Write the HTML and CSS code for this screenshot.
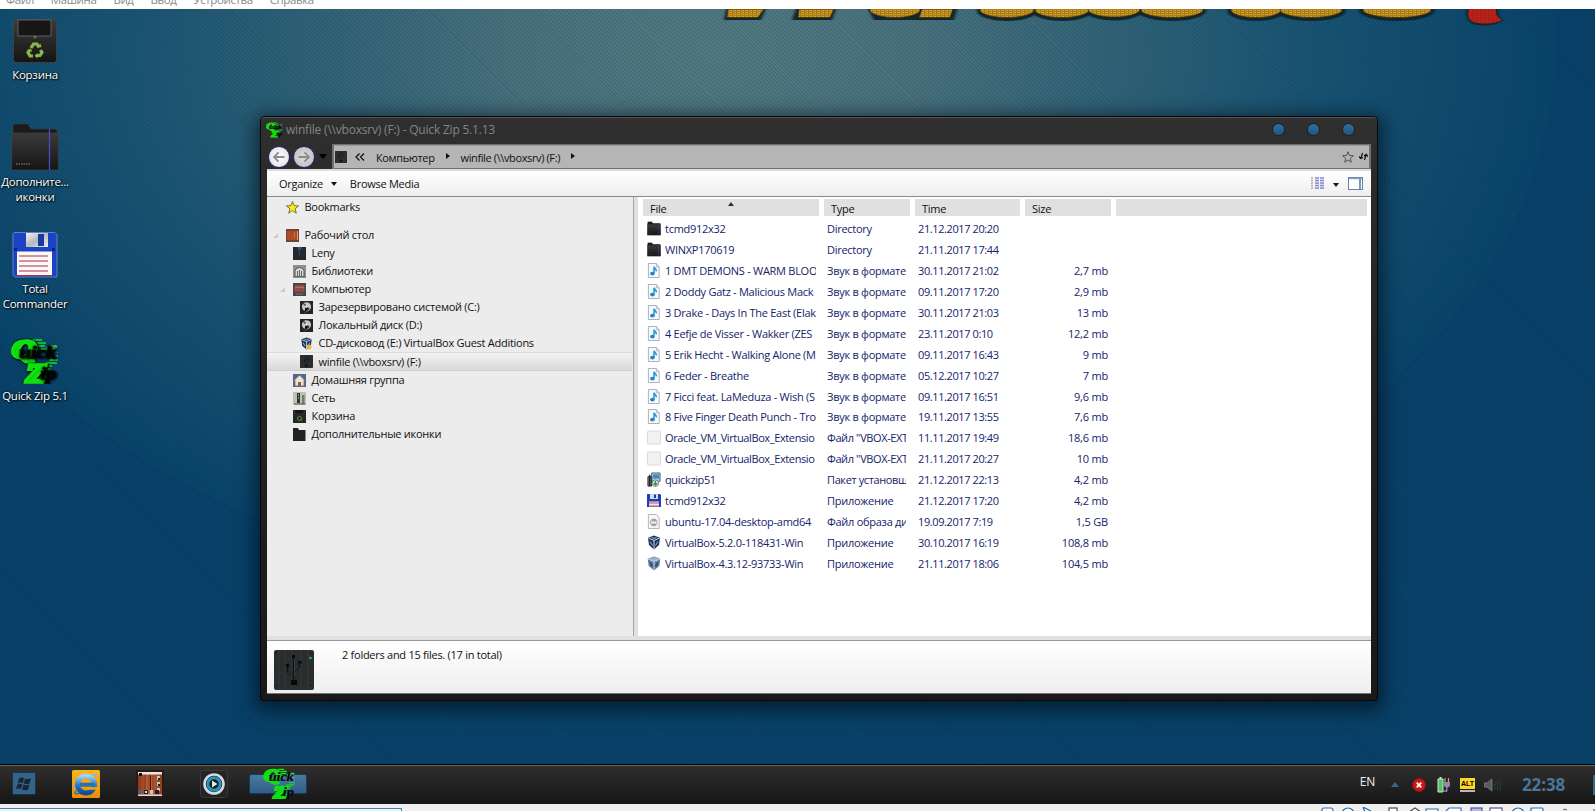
FILE: index.html
```html
<!DOCTYPE html>
<html lang="ru">
<head>
<meta charset="utf-8">
<title>Quick Zip</title>
<link rel="stylesheet" href="styles.css">
</head>
<body>
<svg class="sprite" aria-hidden="true">
  <defs>
    <linearGradient id="dark" x1="0" y1="0" x2="0" y2="1"><stop offset="0" stop-color="#3a3a3a"/><stop offset="1" stop-color="#151515"/></linearGradient>
    <linearGradient id="metal" x1="0" y1="0" x2="1" y2="1"><stop offset="0" stop-color="#f4f4f4"/><stop offset=".5" stop-color="#b9b9bd"/><stop offset="1" stop-color="#ededed"/></linearGradient>
    <linearGradient id="orange" x1="0" y1="0" x2="0" y2="1"><stop offset="0" stop-color="#f9b71c"/><stop offset="1" stop-color="#e88d08"/></linearGradient>
    <linearGradient id="blueball" x1="0" y1="0" x2="0" y2="1"><stop offset="0" stop-color="#9fd4f5"/><stop offset=".5" stop-color="#2c7fc8"/><stop offset="1" stop-color="#0f4c94"/></linearGradient>
    <linearGradient id="wood" x1="0" y1="0" x2="1" y2="0"><stop offset="0" stop-color="#8a3a1c"/><stop offset=".5" stop-color="#c0623a"/><stop offset="1" stop-color="#8d3e20"/></linearGradient>
    <pattern id="weave" width="4" height="4" patternUnits="userSpaceOnUse"><path d="M0 0l1.500 2L0 4M2 2L4 0" stroke="#3d2a00" stroke-width=".8" fill="none" opacity=".7"/></pattern>
  </defs>
  <symbol id="qz" viewBox="0 0 48 46">
    <path d="M22 2h9M26 5h9M25 8h9M30 11h14M38 22h9M34 25h12M33 28h8M30 31h9M24 35h9M38 8h8" stroke="#14e414" stroke-width="1.600"/>
    <path d="M35 9h11M40 14h7M41 18h6" stroke="#8fa6b0" stroke-width="1"/>
    <g class="qz-green"><text x="1" y="20" font-size="25" textLength="24" lengthAdjust="spacingAndGlyphs">Q</text><text x="15" y="44" font-size="26" textLength="20" lengthAdjust="spacingAndGlyphs">Z</text></g>
    <g class="qz-black"><text x="8" y="20" font-size="17" textLength="37" lengthAdjust="spacingAndGlyphs">uick</text><text x="29" y="41" font-size="17" textLength="16" lengthAdjust="spacingAndGlyphs">ip</text></g>
  </symbol>
  <symbol id="folder" viewBox="0 0 48 48">
    <path d="M2 3q0-2 2-2h13l3 5h24q2 0 2 2v6H2z" fill="#1b1b1b" stroke="#3c3c3c" stroke-width=".6"/>
    <rect x=".7" y="10" width="46.600" height="37" rx="1.500" fill="url(#dark)" stroke="#444" stroke-width=".7"/>
    <path d="M38.500 6v41" stroke="#4a4ec0" stroke-width="1.300"/>
    <path d="M5 41h15" stroke="#666" stroke-width="1.400" stroke-dasharray="1.500 1"/>
  </symbol>
  <symbol id="bin" viewBox="0 0 44 44">
    <rect x=".5" y=".5" width="43" height="43" rx="3" fill="url(#dark)" stroke="#444" stroke-width=".8"/>
    <path d="M5 1v16h33V1z" fill="#161616" stroke="#686868" stroke-width=".9"/>
    <circle cx="22" cy="18" r="1.600" fill="#4f7f33"/>
    <g fill="none" stroke="#88b848" stroke-width="3.200"><path d="M18 29l2.500-4h3.500l2 3M27.500 31l1.500 2.500-2 3h-3M20 37h-3l-2-3.500 1.500-2.500"/></g>
    <path d="M24 29l4.500-1-1.200-3.500zM24.500 34v5.500l-3-2.700zM14.500 31l3.500-1.500 1 3.500z" fill="#88b848"/>
  </symbol>
  <symbol id="floppy" viewBox="0 0 46 46">
    <path d="M2 .5h41l2 2V45H3l-2-2V1.500z" fill="#1b43c4" stroke="#6b86cf" stroke-width=".9"/>
    <path d="M14 1h22v14H14z" fill="url(#metal)"/><path d="M26 2h6v12h-6z" fill="#173a9c"/>
    <path d="M5 19.500h35V44H5z" fill="#fbf7f7"/><path d="M7 24h29M7 29h29M7 34h29M7 39h29M5 43.700h35" stroke="#a8304a" stroke-width="1.200"/>
    <path d="M2 16h3v3H2zM40 16h3v3h-3z" fill="#0c247e"/>
  </symbol>
  <symbol id="floppy-small" viewBox="0 0 14 15">
    <path d="M0 1h13l1 1v12H0z" fill="#1b3fc0"/><path d="M3 1h8v5H3z" fill="#d5d9e4"/><path d="M7 1.500h2V5H7z" fill="#173a9c"/><path d="M2 8.500h10v5H2z" fill="#f6dfe2"/><path d="M2 10h10M2 13h10" stroke="#c0566c"/>
  </symbol>
  <symbol id="drive" viewBox="0 0 40 40">
    <rect width="40" height="40" rx="2" fill="#2a2d2d"/><path d="M5 0v40M11 0v40M18 0v40M27 0v40M34 0v40" stroke="#3a3d3d" stroke-width=".7"/>
    <path d="M19.500 33V6M19.500 27l-6-5v-6M19.500 24l6-6v-5" stroke="#0b1714" stroke-width="1.500" fill="none"/><path d="M20.500 26V9M14 22l5 5M26 18l-5 5" stroke="#3f5149" stroke-width=".6" fill="none"/>
    <path d="M12 14h3v3h-3zM24 11h3.500v2.500H24zM17 30h6v5h-6zM18 5h3v3h-3z" fill="#080808"/><circle cx="36.500" cy="8" r="1.300" fill="#36b04a"/><path d="M2 2h1v1H2zM2 35h1v1H2zM36 35h1v1h-1zM36 3h1v1h-1z" fill="#080808"/>
  </symbol>
  <symbol id="music" viewBox="0 0 14 16">
    <path d="M1 .5h8.500L12.500 4v11.500H1z" fill="#f8fbfd" stroke="#9aa3ab" stroke-width=".9"/><path d="M9.500.5V4h3" fill="#dfe4e8" stroke="#9aa3ab" stroke-width=".7"/>
    <ellipse cx="5.300" cy="11.300" rx="2.500" ry="2" fill="#2a7fc4"/><path d="M7 11.500V4c.3 1.800 2.800 2 2.500 5" stroke="#2a9ad8" stroke-width="1.700" fill="none"/>
  </symbol>
  <symbol id="blank" viewBox="0 0 14 14"><rect x=".5" y=".5" width="13" height="13" rx="1" fill="#f1f1f1" stroke="#dadada"/></symbol>
  <symbol id="setup" viewBox="0 0 15 16">
    <path d="M5 1h9v9H5z" fill="#b8c8d2" stroke="#4b5a64"/><path d="M6.500 2.500H13V7H6.500z" fill="#2d8fcb"/><path d="M1 5h4v10H1z" fill="#858585" stroke="#222"/><path d="M3 3v12" stroke="#111" stroke-width="1.300"/><circle cx="9" cy="12" r="3.500" fill="#dfe8df" stroke="#555" stroke-width=".7"/><path d="M9 9.500v4M7 12l2 2 2-2" stroke="#28983c" stroke-width="1.400" fill="none"/>
  </symbol>
  <symbol id="iso" viewBox="0 0 14 16"><path d="M1 .5h8.500L12.500 4v11.500H1z" fill="#f6f6f6" stroke="#aaa" stroke-width=".9"/><circle cx="6.800" cy="9" r="3.500" fill="#a9a9a9" stroke="#777" stroke-width=".7"/><path d="M6.800 9L4 6.500v5zM6.800 9l3-2v4.500z" fill="#e9e9e9"/><circle cx="6.800" cy="9" r="1" fill="#fff"/></symbol>
  <symbol id="vbox" viewBox="0 0 14 15">
    <path d="M7 .5l6 2.200-1 7.300-5 4.500L2 10 1 2.700z" fill="#1c3158"/><path d="M1.500 3L7 5.500 12.500 3M7 5.500V14" stroke="#cfdceb" stroke-width="1" fill="none"/><path d="M3 6.500l2.500 4M11 6.500l-2.500 4M4.500 2.300L7 3.500l2.500-1.200" stroke="#7e9dc4" stroke-width="1.200" fill="none"/>
  </symbol>
  <symbol id="vbox-old" viewBox="0 0 14 15">
    <path d="M7 .5l6.300 2.200-1 7.300L7 14.500 1.700 10 .7 2.700z" fill="#5f7d9f"/><path d="M1 3l6 2.500L13 3 7 1z" fill="#9db2c8"/><path d="M7 5.500V14M1 3l6 2.500L13 3" stroke="#d6e0ea" stroke-width=".8" fill="none"/><path d="M3 6.500l2.500 4M11 6.500l-2.500 4" stroke="#2b4a72" stroke-width="1.500"/>
  </symbol>
  <symbol id="wooddesk" viewBox="0 0 28 28">
    <rect width="28" height="28" rx="1" fill="#2a1a15"/><rect x="2" y="2" width="24" height="24" fill="url(#wood)"/><path d="M2 2h24v2.500H2z" fill="#e8e4e0"/><path d="M3 3h3v3H3z" fill="#111"/><path d="M13 5v15M17 5v15M9 5v15" stroke="#7b3317" stroke-width=".8"/><path d="M14.500 5v15" stroke="#3a1a10"/><path d="M21 6h3v4h-3zM21 12h3v4h-3zM21 18h3v3h-3zM14 20h3v4h-3z" fill="#c8c5c0"/><path d="M22 8h2v2h-2zM22 14h2v2h-2zM8 20h4v4H8zM19 20h4v4h-4z" fill="#20201f"/><path d="M3 20h3v4H3z" fill="#3666b5"/><path d="M9 21h2v2H9z" fill="#ddd"/><path d="M2 24.500h24V26H2z" fill="#dedad6"/>
  </symbol>
</svg>

<div class="host-menu"><span>Файл</span><span>Машина</span><span>Вид</span><span>Ввод</span><span>Устройства</span><span>Справка</span></div>

<main class="desktop">
  <svg class="banner" viewBox="720 0 800 40" preserveAspectRatio="none">
    <g class="banner-shade"><path d="M726 0h40l-5 22h-37zM796 0h40l-4 22h-40zM868 0h89l-3 22h-80z"/><ellipse cx="1007" cy="4" rx="30" ry="20"/><ellipse cx="1062" cy="4" rx="30" ry="20"/><ellipse cx="1114" cy="3" rx="29" ry="20"/><ellipse cx="1172" cy="4" rx="34" ry="20"/><ellipse cx="1256" cy="4" rx="29" ry="20"/><ellipse cx="1311" cy="3" rx="35" ry="21"/><ellipse cx="1397" cy="3" rx="38" ry="21"/><path d="M1466 0h33q-3 13 5 22-12 16-30 9-9-6-8-31z"/></g>
    <g class="gilt"><g id="gilt"><path d="M728 0h36l-6 17h-31zM799 0h35l-4 17h-32zM922 0h31l-3 17h-31z"/><ellipse cx="895" cy="2" rx="25" ry="15"/><ellipse cx="1007" cy="2" rx="27" ry="15"/><ellipse cx="1062" cy="2" rx="27" ry="15"/><ellipse cx="1114" cy="1" rx="26" ry="15"/><ellipse cx="1172" cy="2" rx="31" ry="15"/><ellipse cx="1256" cy="2" rx="25" ry="15"/><ellipse cx="1311" cy="2" rx="31" ry="15"/><ellipse cx="1397" cy="2" rx="34" ry="15"/></g></g>
    <use href="#gilt" fill="url(#weave)"/>
    <path d="M1469 0h27q-2 13 6 22-11 11-27 5-9-6-6-27z" fill="#d51d20"/><path d="M1469 0h27q-2 13 6 22-11 11-27 5-9-6-6-27z" fill="url(#weave)"/>
  </svg>

  <ul class="shortcuts">
    <li><svg class="ic-bin"><use href="#bin"/></svg><span>Корзина</span></li>
    <li><svg class="ic-folder"><use href="#folder"/></svg><span>Дополните...<br>иконки</span></li>
    <li><svg class="ic-floppy"><use href="#floppy"/></svg><span>Total<br>Commander</span></li>
    <li><svg class="ic-qz"><use href="#qz"/></svg><span>Quick Zip 5.1</span></li>
  </ul>

  <section class="window">
    <header class="titlebar">
      <svg class="title-icon"><use href="#qz"/></svg>
      <h1>winfile (\\vboxsrv) (F:) - Quick Zip 5.1.13</h1>
      <div class="controls"><i></i><i></i><i></i></div>
    </header>
    <nav class="navbar">
      <button class="round"><svg viewBox="0 0 22 22"><path d="M17 11H6M10.500 6l-5 5 5 5" /></svg></button>
      <button class="round fwd"><svg viewBox="0 0 22 22"><path d="M5 11h11M11.500 6l5 5-5 5"/></svg></button>
      <i class="caret nav-caret"></i>
      <div class="address">
        <svg class="addr-icon"><use href="#drive"/></svg>
        <svg class="chev" viewBox="0 0 10 8"><path d="M4.500.5L1 4l3.500 3.500M9 .5L5.500 4 9 7.500"/></svg>
        <span class="crumb">Компьютер</span><i class="tri"></i>
        <span class="crumb">winfile (\\vboxsrv) (F:)</span><i class="tri"></i>
        <svg class="fav" viewBox="0 0 12 12"><path d="M6 .7l1.400 3.800 4 .2-3.100 2.500 1 4L6 9l-3.300 2.200 1-4L.6 4.700l4-.2z"/></svg>
        <svg class="refresh" viewBox="0 0 9 8"><path d="M3.500.5L2 5.500M0 4l1.700 2L4 5M5.500 7.500l1.500-5M5 3.500l2.200-1.700L9 4"/></svg>
      </div>
    </nav>
    <div class="toolbar">
      <span class="organize">Organize</span><i class="caret"></i><span class="browse">Browse Media</span>
      <svg class="view" viewBox="0 0 13 13"><path d="M0 1h2M0 3.500h2M0 6h2M0 8.500h2M0 11h2" stroke="#b9a6a0" stroke-width="1.300"/><path d="M4 1h4M9 1h4M4 3.500h4M9 3.500h4M4 6h4M9 6h4M4 8.500h4M9 8.500h4M4 11h4M9 11h4" stroke="#8187cf" stroke-width="1.500"/></svg>
      <i class="caret view-caret"></i>
      <svg class="pane" viewBox="0 0 15 13"><rect x=".5" y=".5" width="14" height="12" fill="#fff" stroke="#6a80a8"/><path d="M1 1.500h13" stroke="#8ea2c4" stroke-width="1.500"/><path d="M12 2v10" stroke="#38809f" stroke-width="1.500"/></svg>
    </div>
    <div class="content">
      <ul class="tree">
        <li class="bookmarks"><svg viewBox="0 0 13 13"><path d="M6.500.5l1.600 4.200 4.500.2-3.500 2.800 1.200 4.500-3.800-2.600-3.800 2.600 1.200-4.500L.4 4.900l4.500-.2z" fill="#ffee16" stroke="#5c5a20" stroke-width=".8"/></svg>Bookmarks</li>
        <li class="open"><svg viewBox="0 0 13 13"><rect width="13" height="13" fill="#6a4434"/><rect x="1" y="2" width="10" height="9" fill="#b04c24"/><path d="M8 4h1M8 6h1M8 8h1M11.500 2v9" stroke="#e09a70"/></svg>Рабочий стол</li>
        <li class="l1"><svg viewBox="0 0 13 13"><rect width="13" height="13" fill="#26282d"/><path d="M4 0l2.500 5L9 0z" fill="#47506a"/><path d="M6.500 2v8" stroke="#2f3c78"/></svg>Leny</li>
        <li class="l1"><svg viewBox="0 0 13 13"><rect width="13" height="13" fill="#8d8f8f"/><path d="M2 12V5q4.500-5 9 0v7" fill="#d8d8d8" stroke="#555"/><path d="M4.500 6v6M6.500 5v7M8.500 6v6M1 11.500h11" stroke="#666"/></svg>Библиотеки</li>
        <li class="l1 open"><svg viewBox="0 0 13 13"><rect width="13" height="13" fill="#4c4444"/><rect x="1.500" y="2" width="10" height="7" fill="#8c4a48"/><path d="M2 5q4-2 9 0" stroke="#b98078" fill="none"/><path d="M3 11h7" stroke="#777"/></svg>Компьютер</li>
        <li class="l2"><svg viewBox="0 0 13 13"><rect width="13" height="13" fill="#232323"/><circle cx="6.500" cy="5.800" r="4.600" fill="#c4c7c7"/><path d="M6.500 5.500L3 2M6 5l3 3-5 4" stroke="#444" stroke-width="1.200"/><circle cx="6.500" cy="5.500" r="1.200" fill="#eee"/></svg>Зарезервировано системой (C:)</li>
        <li class="l2"><svg viewBox="0 0 13 13"><rect width="13" height="13" fill="#232323"/><circle cx="6.500" cy="5.800" r="4.600" fill="#c4c7c7"/><path d="M6.500 5.500L3 2M6 5l3 3-5 4" stroke="#444" stroke-width="1.200"/><circle cx="6.500" cy="5.500" r="1.200" fill="#eee"/></svg>Локальный диск (D:)</li>
        <li class="l2"><svg viewBox="0 0 14 15"><use href="#vbox"/><circle cx="10" cy="11.500" r="2.800" fill="#f0b83a"/></svg>CD-дисковод (E:) VirtualBox Guest Additions</li>
        <li class="l2 selected"><svg><use href="#drive"/></svg>winfile (\\vboxsrv) (F:)</li>
        <li class="l1"><svg viewBox="0 0 13 13"><rect width="13" height="13" fill="#50688a"/><path d="M6.500 1L1 6.500h1V12h9V6.500h1z" fill="#e9e4da" stroke="#8a6a50" stroke-width=".8"/><path d="M5 8h3v4H5z" fill="#8c6148"/></svg>Домашняя группа</li>
        <li class="l1"><svg viewBox="0 0 13 13"><rect width="13" height="13" fill="#bcc2ac"/><path d="M4 1h3v10H4z" fill="#333"/><path d="M9 3h2.500v9H9z" fill="#777"/><path d="M1 12h11" stroke="#4d5944"/><path d="M5 3h1M5 6h1" stroke="#ddd"/></svg>Сеть</li>
        <li class="l1"><svg viewBox="0 0 13 13"><rect width="13" height="13" fill="#252725"/><path d="M2 0v4h9V0" fill="#151515" stroke="#444" stroke-width=".6"/><circle cx="6.500" cy="8.500" r="2" fill="none" stroke="#567d29" stroke-width="1.200"/></svg>Корзина</li>
        <li class="l1"><svg viewBox="0 0 13 13"><path d="M0 0h5l1 2h6.500v11H0z" fill="#222"/></svg>Дополнительные иконки</li>
      </ul>
      <div class="files">
        <div class="cols head"><b class="sorted">File</b><b>Type</b><b>Time</b><b>Size</b><b></b></div>
        <div class="cols row"><svg><use href="#folder"/></svg><span>tcmd912x32</span><span>Directory</span><span>21.12.2017 20:20</span><span></span></div>
        <div class="cols row"><svg><use href="#folder"/></svg><span>WINXP170619</span><span>Directory</span><span>21.11.2017 17:44</span><span></span></div>
        <div class="cols row"><svg><use href="#music"/></svg><span>1 DMT DEMONS - WARM BLOOD</span><span>Звук в формате</span><span>30.11.2017 21:02</span><span>2,7 mb</span></div>
        <div class="cols row"><svg><use href="#music"/></svg><span>2 Doddy Gatz - Malicious Mack</span><span>Звук в формате</span><span>09.11.2017 17:20</span><span>2,9 mb</span></div>
        <div class="cols row"><svg><use href="#music"/></svg><span>3 Drake - Days In The East (Elak</span><span>Звук в формате</span><span>30.11.2017 21:03</span><span>13 mb</span></div>
        <div class="cols row"><svg><use href="#music"/></svg><span>4 Eefje de Visser - Wakker (ZES</span><span>Звук в формате</span><span>23.11.2017 0:10</span><span>12,2 mb</span></div>
        <div class="cols row"><svg><use href="#music"/></svg><span>5 Erik Hecht - Walking Alone (M</span><span>Звук в формате</span><span>09.11.2017 16:43</span><span>9 mb</span></div>
        <div class="cols row"><svg><use href="#music"/></svg><span>6 Feder - Breathe</span><span>Звук в формате</span><span>05.12.2017 10:27</span><span>7 mb</span></div>
        <div class="cols row"><svg><use href="#music"/></svg><span>7 Ficci feat. LaMeduza - Wish (S</span><span>Звук в формате</span><span>09.11.2017 16:51</span><span>9,6 mb</span></div>
        <div class="cols row"><svg><use href="#music"/></svg><span>8 Five Finger Death Punch - Tro</span><span>Звук в формате</span><span>19.11.2017 13:55</span><span>7,6 mb</span></div>
        <div class="cols row tight"><svg><use href="#blank"/></svg><span>Oracle_VM_VirtualBox_Extensio</span><span>Файл "VBOX-EXT</span><span>11.11.2017 19:49</span><span>18,6 mb</span></div>
        <div class="cols row tight"><svg><use href="#blank"/></svg><span>Oracle_VM_VirtualBox_Extensio</span><span>Файл "VBOX-EXT</span><span>21.11.2017 20:27</span><span>10 mb</span></div>
        <div class="cols row tight"><svg><use href="#setup"/></svg><span>quickzip51</span><span>Пакет установщ</span><span>21.12.2017 22:13</span><span>4,2 mb</span></div>
        <div class="cols row"><svg><use href="#floppy-small"/></svg><span>tcmd912x32</span><span>Приложение</span><span>21.12.2017 17:20</span><span>4,2 mb</span></div>
        <div class="cols row"><svg><use href="#iso"/></svg><span>ubuntu-17.04-desktop-amd64</span><span>Файл образа дис</span><span>19.09.2017 7:19</span><span>1,5 GB</span></div>
        <div class="cols row"><svg><use href="#vbox"/></svg><span>VirtualBox-5.2.0-118431-Win</span><span>Приложение</span><span>30.10.2017 16:19</span><span>108,8 mb</span></div>
        <div class="cols row"><svg><use href="#vbox-old"/></svg><span>VirtualBox-4.3.12-93733-Win</span><span>Приложение</span><span>21.11.2017 18:06</span><span>104,5 mb</span></div>
      </div>
    </div>
    <footer class="details"><svg><use href="#drive"/></svg><p>2 folders and 15 files. (17 in total)</p></footer>
  </section>
</main>

<footer class="taskbar">
  <svg class="start" viewBox="0 0 24 24"><rect x=".5" y=".5" width="23" height="22" rx="1.500" fill="#35648a" stroke="#1c3347"/><g fill="#172738"><path d="M7 6.500q3-1.800 5-.3l-1.300 5q-2.500-1.300-5 .2zM13 6.500q2.500 1.200 6-.2l-1.400 5.200q-3 1.200-5.800 0zM5.400 12.400q2.800-1.400 5-.1L9 17q-2-1.300-4.900.2zM11.500 12.600q2.500 1.300 5.800 0L16 17.700q-3 1.300-5.800-.2z"/></g></svg>
  <svg class="app ie" viewBox="0 0 28 28"><rect width="28" height="28" rx="1.500" fill="url(#orange)"/><path d="M3 19Q1 13 10 8T26 6" fill="none" stroke="#8ab6dc" stroke-width="1.500"/><circle cx="14" cy="14.500" r="8.500" fill="none" stroke="url(#blueball)" stroke-width="5"/><path d="M8 12.700h14v4H8z" fill="#2371b9"/><path d="M16.500 17.200h10v2.500h-10z" fill="#f0a512"/><path d="M4 21q-3 4 4 2" fill="none" stroke="#2371b9" stroke-width="1.500"/></svg>
  <svg class="app wood"><use href="#wooddesk"/></svg>
  <svg class="app media" viewBox="0 0 28 28"><rect x=".5" y=".5" width="27" height="27" rx="3" fill="#242424" stroke="#3a3a3a"/><circle cx="14" cy="14" r="9.500" fill="#151d22" stroke="#d4dadd" stroke-width="2.600"/><circle cx="14" cy="14" r="6.200" fill="none" stroke="#2794b8" stroke-width="3"/><path d="M12 10.500l5.500 3.500-5.500 3.500z" fill="#e6e6e6"/></svg>
  <div class="active"><svg><use href="#qz"/></svg></div>
  <div class="tray">
    <span class="lang">EN</span>
    <i class="up"></i>
    <svg class="err" viewBox="0 0 14 14"><circle cx="7" cy="7" r="6.500" fill="#c81818" stroke="#851414"/><path d="M4.700 4.700l4.600 4.600M9.300 4.700L4.700 9.300" stroke="#fff" stroke-width="1.800"/></svg>
    <svg class="batt" viewBox="0 0 14 16"><path d="M1 2h5v13H1z" fill="#4fc45a" stroke="#d5e5d5"/><path d="M2.500 0h2v2h-2z" fill="#ddd"/><path d="M8 1v4M11.500 1v4" stroke="#d6a35a" stroke-width="1.200"/><path d="M6.500 5H13v4q-3 3-6 0z" fill="#8f89b0"/><path d="M9.800 10v4H7" stroke="#8f89b0" stroke-width="1.300" fill="none"/></svg>
    <div class="alt"><span>ALT</span></div>
    <svg class="vol" viewBox="0 0 17 14"><path d="M0 5h3l5-4v12L3 9H0z" fill="#5a5a5a" stroke="#8a8a8a" stroke-width=".7"/><path d="M11 4v7M13.500 3v9M16 1.500v12" stroke="#1d6a25" stroke-width="1" stroke-dasharray="1 1"/></svg>
    <time>22:38</time><i class="peek"></i>
  </div>
</footer>
<div class="host-status">
  <div class="hint"></div>
  <svg viewBox="1320 0 275 4" class="host-icons"><g fill="#fff" stroke="#2f6fa8" stroke-width="1.200"><rect x="1322" y="1" width="11" height="8" rx="2"/><circle cx="1348" cy="7" r="6"/><path d="M1363 0l3 8M1363 0l8 4M1426 2h12v4h-12z"/><rect x="1389" y="1" width="8" height="8" stroke="#46505a"/><path d="M1409 5l6-4 6 4" stroke="#46505a"/><path d="M1445 5l4-4h12v6h-16z"/><rect x="1471" y="1" width="11" height="7" fill="#b9b9ea" stroke="#5656a5"/><rect x="1490" y="1" width="12" height="7" stroke="#5656a5"/><circle cx="1518" cy="7" r="6"/><rect x="1531" y="1" width="12" height="8" rx="1"/></g><path d="M1563 3l2-1 2 1M1593 3h2" stroke="#555" fill="none"/></svg>
</div>
</body>
</html>
```

FILE: styles.css
```css
* { box-sizing: border-box; }
body {
  margin: 0; width: 1595px; height: 811px; overflow: hidden;
  display: flex; flex-direction: column;
  font-family: "Open Sans", "Noto Sans", sans-serif; font-size: 11px; letter-spacing: -0.27px; color: #111;
}
ul, h1, p { margin: 0; padding: 0; list-style: none; font-weight: 400; }
svg { display: block; flex: none; }
i { flex: none; }
.sprite { position: absolute; width: 0; height: 0; }
.qz-green { font-family: "Liberation Serif", serif; font-weight: 700; font-style: italic; fill: #10e010; stroke: #10e010; stroke-width: 3.4; }
.qz-black { font-family: "Liberation Serif", serif; font-weight: 700; font-style: italic; fill: #050805; stroke: #050805; stroke-width: .3; }

.host-menu { height: 9px; flex: none; background: #fff; display: flex; gap: 17px; padding-left: 6px; overflow: hidden; color: #8a8a8a; font-size: 11.5px; letter-spacing: -.4px; line-height: 16px; }
.host-menu span { margin-top: -8px; }

.desktop {
  position: relative; height: 755px; flex: none; overflow: hidden;
  background:
    repeating-linear-gradient(45deg, rgba(0,20,45,.10) 0 1.4px, rgba(255,255,255,.018) 1.4px 2.8px),
    radial-gradient(ellipse 840px 560px at 715px 40px, #517a80 0%, #47707c 25%, #2f6276 47%, #175372 70%, #06436a 100%, #064068 100%);
}
.banner { position: absolute; left: 720px; top: 0; width: 800px; height: 20px; overflow: hidden; }
.banner-shade { fill: #10262b; filter: blur(1.5px); }
.gilt { fill: #dba426; stroke: #3b2c06; stroke-width: 1; }

.shortcuts { width: 70px; padding-top: 9px; color: #fff; text-shadow: 1px 1px 2px #000, 0 0 2px #000; font-size: 11.5px; line-height: 15px; text-align: center; }
.shortcuts li { height: 107px; display: flex; flex-direction: column; align-items: center; white-space: nowrap; }
.shortcuts svg { margin-bottom: 3px; height: 46px; width: 46px; }
.shortcuts .ic-bin { width: 44px; height: 44px; margin: 1px 0 4px; }
.shortcuts .ic-folder { width: 48px; height: 48px; margin: -2px 0 3px; }
.shortcuts .ic-qz { width: 48px; margin-top: -1px; margin-bottom: 4px; }

.window {
  position: absolute; left: 260px; top: 107px; width: 1118px; height: 585px;
  display: flex; flex-direction: column; padding: 0 6px 6px 6px;
  background: linear-gradient(#303030, #2b2b2b 10%, #191919); border: 1px solid #080808; border-radius: 4px 4px 2px 2px;
  box-shadow: inset 0 1px #555, 0 4px 18px 5px rgba(0,10,20,.6);
}
.titlebar { height: 27px; flex: none; display: flex; align-items: center; color: #858585; padding-bottom: 2px; }
.title-icon { width: 17px; height: 16px; margin: 1px 3px 0 -1px; }
.titlebar h1 { font-size: 12px; line-height: 16px; letter-spacing: -.2px; }
.controls { margin-left: auto; display: flex; gap: 24px; padding-right: 17px; }
.controls i { width: 11px; height: 11px; border-radius: 50%; background: linear-gradient(#356d99, #1f5480); box-shadow: 0 0 0 1px #1b2026; }

.navbar { height: 25px; flex: none; display: flex; align-items: center; }
.round { width: 22px; height: 22px; padding: 0; margin: 0 2px 0 1px; border: 1px solid #25257c; border-radius: 50%; background: radial-gradient(#fff, #dcdcdc); }
.round svg { width: 20px; height: 20px; fill: none; stroke: #8c8c8c; stroke-width: 2; }
.round.fwd { background: radial-gradient(#ddd, #bbb); }
.caret { border: 3px solid transparent; border-top: 4px solid #111; border-bottom: 0; }
.nav-caret { border-width: 5px 4px 0; border-top-color: #000; margin: 0 5px 0 2px; }
.address { flex: 1; height: 25px; display: flex; align-items: center; background: #b5b5b5; border: 1px solid #707070; border-width: 1px 2px 1px 2px; padding-left: 1px; box-shadow: inset 0 1px #999; }
.addr-icon { width: 12px; height: 12px; margin-right: 8px; }
.chev { width: 10px; height: 8px; fill: none; stroke: #111; stroke-width: 1.3; margin-right: 11px; }
.crumb { line-height: 16px; padding-top: 2px; letter-spacing: -.38px; }
.tri { border: 3px solid transparent; border-left: 4px solid #111; border-right: 0; margin: -1px 11px 0 11px; }
.fav { width: 12px; height: 12px; margin-left: auto; fill: none; stroke: #555; stroke-width: 1; }
.refresh { width: 9px; height: 9px; margin: 0 1px 0 5px; fill: none; stroke: #111; stroke-width: 1.2; }

.toolbar { height: 28px; flex: none; display: flex; align-items: center; background: linear-gradient(#fff, #eee); border-top: 2px solid #ddd; border-bottom: 1px solid #8a8a8a; padding: 1px 0 0 12px; line-height: 16px; }
.toolbar .caret { margin: 0 13px 0 8px; }
.toolbar .view { width: 13px; height: 13px; margin: -2px 0 0 auto; }
.toolbar .view-caret { margin: 1px 9px 0 9px; }
.toolbar .pane { width: 15px; height: 13px; margin: -2px 8px 0 0; }

.content { height: 444px; flex: none; display: flex; background: #e0e0e0; border-bottom: 1px solid #999; padding-bottom: 4px; }
.tree { width: 367px; background: #ececec; border-right: 1px solid #a5a5a5; margin-right: 4px; line-height: 18px; white-space: nowrap; }
.tree li { height: 18px; display: flex; align-items: center; padding-left: 19px; position: relative; }
.tree svg { width: 13px; height: 13px; margin-right: 5.5px; }
.tree .bookmarks { height: 20px; margin-bottom: 9px; }
.tree .l1 { padding-left: 26px; }
.tree .l2 { padding-left: 33px; }
.tree .selected { height: 19px; background: linear-gradient(#f3f3f3, #d9d9d9); border-top: 1px solid #dcdcdc; border-bottom: 1px solid #cfcfcf; margin-right: 1px; }
.tree .open::before { content: ""; position: absolute; margin-left: -13px; border-bottom: 5px solid #ccc; border-left: 5px solid transparent; }

.files { flex: 1; background: #fff; padding: 2px 0 0 5px; overflow: hidden; }
.cols { display: grid; grid-template-columns: 176px 86px 105px 86px 251px; column-gap: 5px; }
.head { height: 17px; margin-bottom: 2px; }
.head b { font-weight: 400; background: #e0e0e0; padding-left: 7px; line-height: 20px; height: 17px; position: relative; }
.sorted::after { content: ""; position: absolute; left: 85px; top: 3px; border: 3px solid transparent; border-top: 0; border-bottom: 4px solid #333; }
.row { height: 20.940px; line-height: 21px; color: #14236a; grid-template-columns: 22px 151px 81px 103px 86px; column-gap: 0; }
.row svg { width: 14px; height: 15px; margin: 3px 0 0 3.5px; }
.row span { overflow: hidden; white-space: nowrap; }
.row span:nth-of-type(2) { margin-left: 11px; margin-right: -9px; }
.row span:nth-of-type(3) { margin-left: 21px; margin-right: -21px; letter-spacing: -.4px; }
.row span:nth-of-type(4) { margin-left: 22px; margin-right: -22px; text-align: right; letter-spacing: -.2px; }
.row.tight span:nth-of-type(-n+2) { letter-spacing: -.38px; }

.details { flex: 1; display: flex; background: linear-gradient(#fff, #eee); padding: 9px 0 0 7px; border-bottom: 1px solid #777; }
.details svg { width: 40px; height: 40px; margin-right: 28px; }
.details p { line-height: 10px; }

.taskbar { height: 40px; flex: none; display: flex; align-items: flex-start; background: linear-gradient(#2f2f2f, #161616); border-top: 1px solid #000; box-shadow: inset 0 1px #666; padding-left: 12px; }
.start { width: 24px; height: 24px; margin: 7px 36px 0 0; }
.app { width: 28px; height: 28px; margin: 5px 36px 0 0; }
.app.media { margin-right: 21px; }
.active { width: 58px; height: 20px; margin-top: 9px; background: linear-gradient(#4a7aa0, #2f5f88); border: 1px solid #1d3a55; border-radius: 2px; display: flex; justify-content: center; }
.active svg { width: 33px; height: 31px; margin: -7px 0 0 2px; flex: none; overflow: visible; }
.tray { margin-left: auto; display: flex; align-items: center; height: 39px; }
.lang { color: #f0f0f0; font-size: 12px; margin: -6px 16px 0 0; }
.up { border: 4px solid transparent; border-top: 0; border-bottom: 5px solid #356789; margin-right: 13px; }
.err { width: 14px; height: 14px; margin-right: 11px; }
.batt { width: 14px; height: 16px; margin-right: 9px; }
.alt { width: 15px; height: 14px; margin-right: 9px; display: flex; justify-content: center; border-bottom: 2px solid #bbb; }
.alt span { width: 15px; height: 11px; flex: none; background: #ffd723; color: #000; font: 700 7px/11px "Liberation Sans", sans-serif; text-align: center; letter-spacing: 0; }
.vol { width: 17px; height: 14px; margin-right: 21px; }
.tray time { color: #4b7699; font: 700 17px/20px "Open Sans", sans-serif; width: 46px; letter-spacing: -.1px; }
.peek { width: 2px; height: 20px; background: #356789; margin-left: 25px; }

.host-status { height: 7px; flex: none; background: #f0f0f0; display: flex; justify-content: space-between; align-items: flex-end; }
.hint { width: 402px; height: 3px; background: #e8f6fb; border: 1px solid #3d86b5; border-width: 1px 1px 0 0; }
.host-icons { width: 275px; height: 4px; }
```
